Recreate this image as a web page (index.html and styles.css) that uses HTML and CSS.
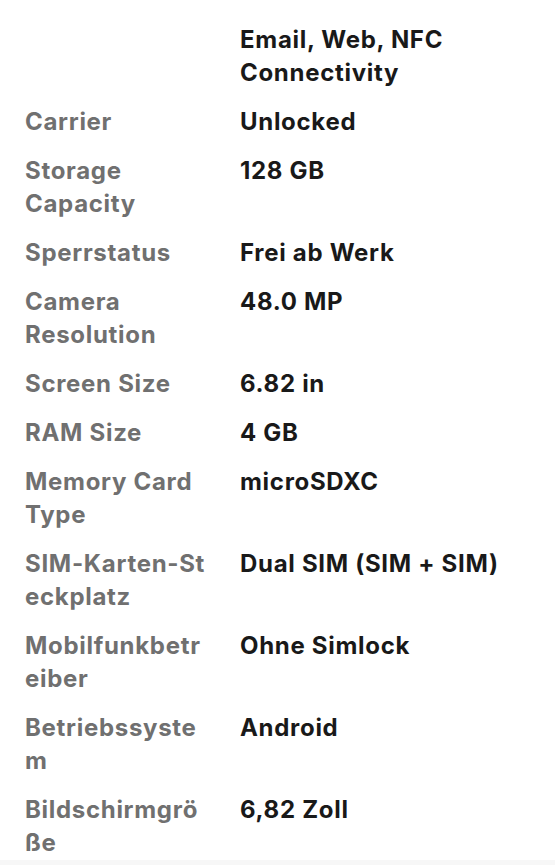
FILE: index.html
```html
<!DOCTYPE html>
<html lang="de">

<head>
    <meta charset="UTF-8">
    <meta name="viewport" content="width=device-width, initial-scale=1.0">
    <title>Artikelmerkmale</title>
    <link rel="stylesheet" href="styles.css">
</head>

<body>
    <div class="specs">
        <dl class="spec-list">
            <dt></dt>
            <dd>Email, Web, NFC Connectivity</dd>

            <dt>Carrier</dt>
            <dd>Unlocked</dd>

            <dt>Storage Capacity</dt>
            <dd>128 GB</dd>

            <dt>Sperrstatus</dt>
            <dd>Frei ab Werk</dd>

            <dt>Camera Resolution</dt>
            <dd>48.0 MP</dd>

            <dt>Screen Size</dt>
            <dd>6.82 in</dd>

            <dt>RAM Size</dt>
            <dd>4 GB</dd>

            <dt>Memory Card Type</dt>
            <dd>microSDXC</dd>

            <dt><span class="brk">SIM-Karten-Steckplatz</span></dt>
            <dd>Dual SIM (SIM + SIM)</dd>

            <dt>Mobilfunkbetreiber</dt>
            <dd>Ohne Simlock</dd>

            <dt>Betriebssystem</dt>
            <dd>Android</dd>

            <dt>Bildschirmgröße</dt>
            <dd>6,82 Zoll</dd>
        </dl>
    </div>
    <div class="footer-band"></div>
</body>

</html>
```

FILE: styles.css
```css
body {
    margin: 0;
    padding: 0;
    background-color: #ffffff;
    font-family: Inter, "Noto Sans", Arial, sans-serif;
}

.specs {
    padding: 23px 25px 15px 25px;
    height: 822px;
    overflow: hidden;
}

.spec-list {
    margin: 0;
    display: grid;
    grid-template-columns: 184px 1fr;
    column-gap: 31px;
    row-gap: 16px;
    font-size: 24px;
    line-height: 33px;
    font-weight: 700;
    letter-spacing: 0.7px;
}

.spec-list dt {
    color: #707070;
    overflow-wrap: anywhere;
}

.spec-list dd {
    margin: 0;
    color: #191919;
}

.brk {
    word-break: break-all;
}

.footer-band {
    height: 5px;
    background-color: #f7f7f7;
}
```
